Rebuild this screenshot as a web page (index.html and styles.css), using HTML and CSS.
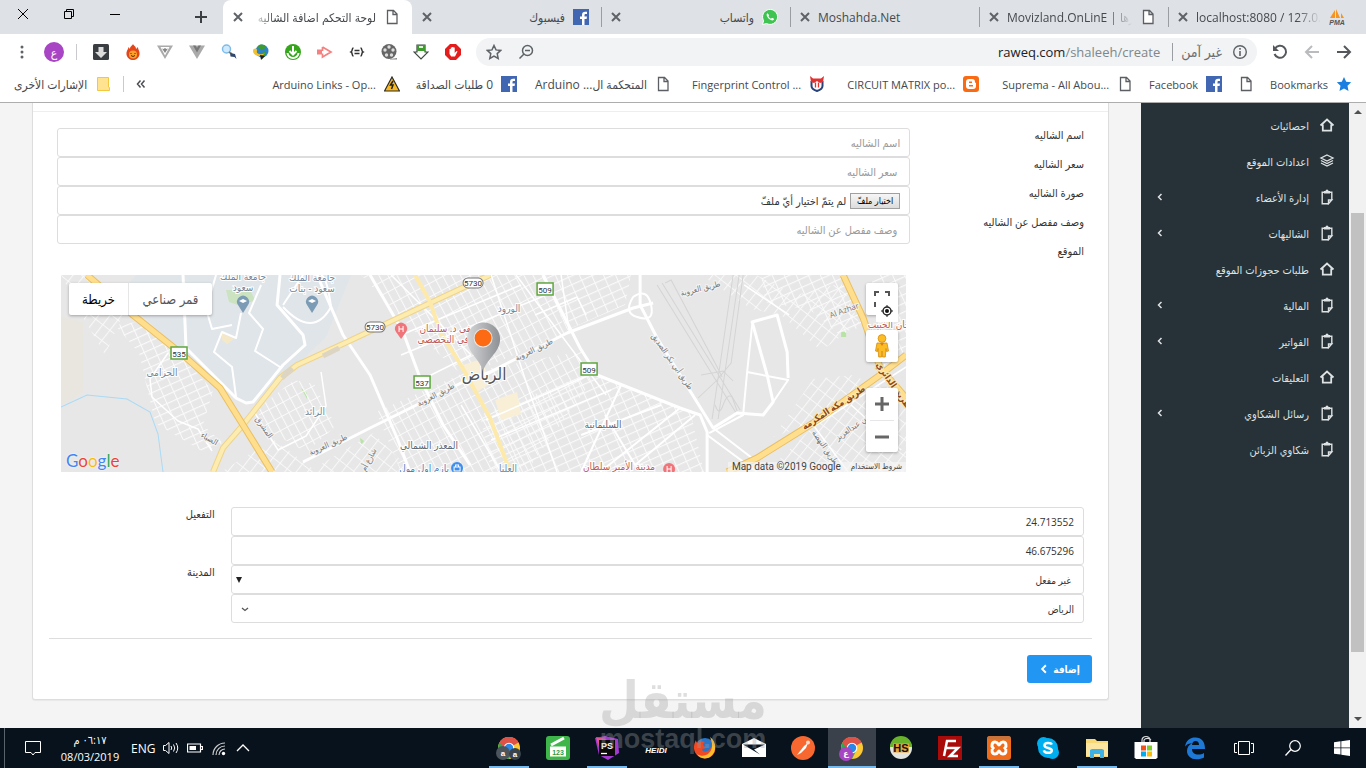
FILE: index.html
```html
<!DOCTYPE html>
<html lang="ar" dir="rtl">
<head>
    <meta charset="UTF-8">
    <meta name="viewport" content="width=device-width, initial-scale=1">
    <title>لوحة التحكم اضافة الشاليه</title>
    <link rel="stylesheet" href="styles.css">
</head>
<body>
    <!-- shared icons -->
    <svg class="sprite" aria-hidden="true">
        <symbol id="i-close" viewBox="0 0 10 10"><path d="M1 1l8 8M9 1l-8 8" fill="none" stroke="#5f6368" stroke-width="2"/></symbol>
        <symbol id="i-doc" viewBox="0 0 16 16"><path d="M3.500 1.500h6l3.500 3.500v9.500h-9.500zM9 1.500v4h4" fill="#fff" stroke="#5b5e62" stroke-width="1.300"/></symbol>
        <symbol id="i-fb" viewBox="0 0 16 16"><path d="M0 0h16v16H0z" fill="#4267b2"/><path d="M9 16V10H7V7.500h2V6c0-2 1.200-3.200 3.200-3.200H14V5h-1.200c-1 0-1.300.5-1.300 1.300v1.200H14L13.600 10h-2.100v6z" fill="#fff"/></symbol>
        <symbol id="i-home" viewBox="0 0 16 16"><path d="M1.500 8.500L8 2.500l6.500 6M3.800 7.500v6.200h8.400V7.500" fill="none" stroke="currentColor" stroke-width="1.800"/></symbol>
        <symbol id="i-clip" viewBox="0 0 16 16"><path d="M5 3.300H3.200v11.400H9.500M12.800 10.500V3.300H11M9.500 14.700V11h3.300z" fill="none" stroke="currentColor" stroke-width="1.400"/><path d="M5 2h1.500a1.500 1.500 0 0 1 3 0H11v2.500H5z" fill="currentColor"/></symbol>
        <symbol id="i-layers" viewBox="0 0 16 16"><path d="M8 2l6 3-6 3-6-3zM2 7.500l6 3 6-3M2 10l6 3 6-3" fill="none" stroke="currentColor" stroke-width="1.300"/></symbol>
        <symbol id="i-left" viewBox="0 0 8 8"><path d="M5.500 1l-3 3 3 3" fill="none" stroke="currentColor" stroke-width="1.500"/></symbol>
        <symbol id="i-chrome" viewBox="0 0 24 24"><circle cx="12" cy="12" r="11" fill="#fcc934"/><path d="M12 12L2.500 6.500A11 11 0 0 1 21.500 6.500z" fill="#de5347"/><path d="M12 12L2.500 6.500A11 11 0 0 0 12 23l4-8z" fill="#2da94f"/><path d="M12 7h9.800A11 11 0 0 0 2.500 6.500L7 13z" fill="#de5347"/><circle cx="12" cy="12" r="5.300" fill="#fff"/><circle cx="12" cy="12" r="4.200" fill="#2b87e8"/></symbol>
    </svg>

    <header class="browser">
        <div class="tabs">
            <div class="tab">
                <svg class="fav" viewBox="0 0 16 16"><path d="M1 9L6 1v8zM7 9V0l4 9zM12 9V4l3 5z" fill="#f7941d"/><text x="8" y="15.500" text-anchor="middle" class="pma">PMA</text></svg>
                <span class="tab-title ltr fade-end">localhost:8080 / 127.0.0.1</span>
                <button class="tab-close" aria-label="إغلاق"><svg><use href="#i-close"/></svg></button>
            </div>
            <div class="tab">
                <svg class="fav"><use href="#i-doc"/></svg>
                <span class="tab-title ltr fade-end">Movizland.OnLinE | غيرها</span>
                <button class="tab-close" aria-label="إغلاق"><svg><use href="#i-close"/></svg></button>
            </div>
            <div class="tab">
                <span class="tab-title ltr">Moshahda.Net</span>
                <button class="tab-close" aria-label="إغلاق"><svg><use href="#i-close"/></svg></button>
            </div>
            <div class="tab">
                <svg class="fav" viewBox="0 0 16 16"><path d="M.5 15.500L1.600 11.700A7.500 7.500 0 1 1 4.500 14.500z" fill="#3fc351" stroke="#fff"/><path d="M5.500 4.200c-1 .6-1.200 1.800-.2 3.500 1.200 2 3 3.600 5 3.700 1 0 1.700-.8 1.700-1.700L10 8.700l-1 1C7.800 9.200 7 8.300 6.500 7.200l.7-1z" fill="#fff"/></svg>
                <span class="tab-title">واتساب</span>
                <button class="tab-close" aria-label="إغلاق"><svg><use href="#i-close"/></svg></button>
            </div>
            <div class="tab no-line">
                <svg class="fav"><use href="#i-fb"/></svg>
                <span class="tab-title">فيسبوك</span>
                <button class="tab-close" aria-label="إغلاق"><svg><use href="#i-close"/></svg></button>
            </div>
            <div class="tab active">
                <svg class="fav"><use href="#i-doc"/></svg>
                <span class="tab-title fade-start">لوحة التحكم اضافة الشاليه</span>
                <button class="tab-close" aria-label="إغلاق"><svg><use href="#i-close"/></svg></button>
            </div>
            <button class="new-tab" aria-label="علامة تبويب جديدة"><svg viewBox="0 0 12 12"><path d="M6 0v12M0 6h12" stroke="#3c4043" stroke-width="2"/></svg></button>
            <div class="window-buttons">
                <button aria-label="تصغير"><svg viewBox="0 0 12 12"><path d="M1 6.500h10" stroke="#000"/></svg></button>
                <button aria-label="استعادة"><svg viewBox="0 0 12 12"><path d="M1.500 3.500h7v7h-7zM3.500 3.500v-2h7v7h-2" fill="none" stroke="#000"/></svg></button>
                <button aria-label="إغلاق النافذة"><svg viewBox="0 0 12 12"><path d="M1 1l10 10M11 1L1 11" stroke="#000"/></svg></button>
            </div>
        </div>

        <div class="toolbar">
            <button class="tool" aria-label="رجوع"><svg viewBox="0 0 16 16"><path d="M1 8h13M8 2l6 6-6 6" fill="none" stroke="#54585c" stroke-width="2"/></svg></button>
            <button class="tool" aria-label="تقدم"><svg viewBox="0 0 16 16"><path d="M15 8H2M8 2L2 8l6 6" fill="none" stroke="#b9bbbe" stroke-width="2"/></svg></button>
            <button class="tool" aria-label="تحديث"><svg viewBox="0 0 16 16"><path d="M3 4.500A6 6 0 1 1 2.500 10" fill="none" stroke="#54585c" stroke-width="2"/><path d="M1 1v6h6z" fill="#54585c"/></svg></button>
            <div class="omnibox">
                <svg viewBox="0 0 16 16"><circle cx="8" cy="8" r="6.300" fill="none" stroke="#5f6368" stroke-width="1.400"/><path d="M8 7v5M8 4v1.700" stroke="#5f6368" stroke-width="1.600"/></svg>
                <span class="secure">غير آمن</span>
                <span class="url" dir="ltr">raweq.com<span>/shaleeh/create</span></span>
                <svg viewBox="0 0 16 16"><circle cx="9.500" cy="6.500" r="5" fill="none" stroke="#5f6368" stroke-width="1.500"/><path d="M7 6.500h5M6 10l-4.500 4.500" stroke="#5f6368" stroke-width="1.500"/></svg>
                <svg viewBox="0 0 16 16"><path d="M8 1.500l2 4.400 4.700.5-3.500 3.200 1 4.800L8 12l-4.200 2.400 1-4.800L1.300 6.400 6 5.900z" fill="none" stroke="#5f6368" stroke-width="1.500"/></svg>
            </div>
            <div class="extensions">
                <svg viewBox="0 0 16 16"><path d="M5 0h6l5 5v6l-5 5H5l-5-5V5z" fill="#e51c1c"/><path d="M4.500 8V5h1.300V3.500h1.300V3h1.300v.5h1.300V9l1.800-2 1 .5L10 12.500H6.200L4.500 10z" fill="#fff"/></svg>
                <svg viewBox="0 0 16 16"><path d="M4 1h8v7h3l-7 7-7-7h3z" fill="#fff" stroke="#3b4a3f" stroke-width="1.200"/><path d="M4 1h8v6H4z" fill="#3d9a2d"/><path d="M6 2h4v2H6z" fill="#dff0da"/></svg>
                <svg viewBox="0 0 16 16"><circle cx="8" cy="7.500" r="7.500" fill="#666"/><g fill="#ddd"><circle cx="8" cy="3" r="1.700"/><circle cx="12" cy="6" r="1.700"/><circle cx="10.500" cy="11" r="1.700"/><circle cx="5.500" cy="11" r="1.700"/><circle cx="4" cy="6" r="1.700"/></g><path d="M9 15c3 0 5-1 7-1v1.500H9z" fill="#888"/></svg>
                <svg viewBox="0 0 16 16"><path d="M4.500 4C2.500 4 4 7 2 8c2 1 .5 4 2.500 4M11.500 4c2 0 .5 3 2.500 4-2 1-.5 4-2.500 4M5.500 6.500h5M5.500 9.500h5" fill="none" stroke="#333" stroke-width="1.500"/></svg>
                <svg viewBox="0 0 16 16"><path d="M5.500 3l8.500 5-8.500 5V9.500M5.500 3v4" fill="none" stroke="#f48080" stroke-width="1.700"/><path d="M0 5.500h5v5H0z" fill="#f48080"/></svg>
                <svg viewBox="0 0 16 16"><circle cx="8" cy="8" r="8" fill="#35a51b"/><path d="M8 2v8M4.500 7L8 10.500 11.500 7M2.500 9a5.500 5 0 0 0 11 0" fill="none" stroke="#fff" stroke-width="2"/></svg>
                <svg viewBox="0 0 16 16"><circle cx="9" cy="7" r="6.500" fill="#2c83c6"/><path d="M5 2c3-3 7-1 8 1l-3 3-4-1zM9 9l4-2-1 5-3 3z" fill="#3e9b2f"/><path d="M0 7c0-3 4-3 4-1s-1 3 2 4 6-1 6-1c-3 5-12 3-12-2z" fill="#f2c12e"/><path d="M7 11l5 1-4 4z" fill="#222"/></svg>
                <svg viewBox="0 0 16 16"><circle cx="5.500" cy="5" r="4" fill="#cfeaff" stroke="#7ebce8" stroke-width="1.500"/><path d="M8 8l3 2" stroke="#777" stroke-width="2"/><path d="M9 9l5 1 1.500 5-2-2-4-.5z" fill="#31476b"/></svg>
                <svg viewBox="0 0 16 16"><path d="M0 1.500h16L8 15z" fill="#aaa"/><path d="M4 1.500h2.500L8 4l1.500-2.500H12L8 8.500z" fill="#777"/></svg>
                <svg viewBox="0 0 16 16"><path d="M0 1.500h16L8 15z" fill="#aaa"/><path d="M3.500 3h9L8 11.500z" fill="#fff"/><path d="M5 4.500l1.500.5L8 4l1.500 1L11 4.500 8 9z" fill="#888"/></svg>
                <svg viewBox="0 0 16 16"><path d="M8 0c1 2 3 2 3 5l2-2c0 3 2 4 1.500 7.500C14 14 11 16 8 16s-6-2-6.500-5.500C1 7 3 6 3.500 3L5 5c0-3 2-3 3-5z" fill="#e4461b"/><circle cx="8" cy="10.500" r="4" fill="#f9a12b"/><path d="M6 10v-1M10 10v-1M6 11.500q2 2 4 0" fill="none" stroke="#5a2508"/></svg>
                <svg viewBox="0 0 16 16"><rect width="16" height="16" rx="1.500" fill="#3a3e42"/><path d="M5.500 3h5v5H14l-6 6-6-6h3.500z" fill="#ddd"/></svg>
            </div>
            <span class="divider"></span>
            <button class="avatar">ع</button>
            <button class="dots" aria-label="القائمة"><svg viewBox="0 0 4 14"><g fill="#5f6368"><circle cx="2" cy="2" r="1.500"/><circle cx="2" cy="7" r="1.500"/><circle cx="2" cy="12" r="1.500"/></g></svg></button>
        </div>

        <nav class="bookmarks">
            <a href="#"><svg viewBox="0 0 16 16"><path d="M8 1l2.200 4.700 5 .6-3.700 3.500 1 5.200L8 12.500 3.500 15l1-5.200L.8 6.300l5-.6z" fill="#1a7fe0"/></svg><span class="latin" dir="ltr">Bookmarks</span></a>
            <a href="#" aria-label="صفحة"><svg><use href="#i-doc"/></svg></a>
            <a href="#"><svg><use href="#i-fb"/></svg><span class="latin" dir="ltr">Facebook</span></a>
            <a href="#" class="wide"><svg><use href="#i-doc"/></svg><span class="latin" dir="ltr">Suprema - All Abou...</span></a>
            <a href="#" class="wide"><svg viewBox="0 0 16 16"><rect width="16" height="16" rx="3" fill="#f96a12"/><path d="M6 3h3a3 3 0 0 1 3 3v.7h1V10a3 3 0 0 1-3 3H6a3 3 0 0 1-3-3V6a3 3 0 0 1 3-3z" fill="#fff"/><path d="M6 6.200h3M6 9.800h4" stroke="#f96a12" stroke-width="1.500"/></svg><span class="latin" dir="ltr">CIRCUIT MATRIX po...</span></a>
            <a href="#" class="wide"><svg viewBox="0 0 16 16"><path d="M2.500 5v5c0 3 2.500 4 5.500 5 3-1 5.500-2 5.500-5V5" fill="none" stroke="#29427c" stroke-width="2"/><path d="M1 0l3 2.500h8L15 0l-1 6-3 1-3-2-3 2-3-1z" fill="#e03030"/><path d="M6.500 6.500v5M9.500 6.500v5" stroke="#e03030" stroke-width="1.300"/></svg><span class="latin" dir="ltr">Fingerprint Control ...</span></a>
            <a href="#" class="wide"><svg><use href="#i-doc"/></svg><span dir="ltr">Arduino ...المتحكمة ال</span></a>
            <a href="#"><svg><use href="#i-fb"/></svg><span>0 طلبات الصداقة</span></a>
            <a href="#"><svg viewBox="0 0 16 16"><path d="M8 1l7.500 14H.5z" fill="#f9b81f" stroke="#2a2a2a" stroke-width="1.200"/><path d="M9 5L6.500 9H9l-1.500 4" fill="none" stroke="#222" stroke-width="1.500"/></svg><span class="latin" dir="ltr">Arduino Links - Op...</span></a>
            <button class="more" aria-label="المزيد"><svg viewBox="0 0 10 10"><path d="M4.500 1.500L1.500 5l3 3.500M8.500 1.500l-3 3.500 3 3.500" fill="none" stroke="#4b4e52" stroke-width="1.500"/></svg></button>
            <span class="divider"></span>
            <a href="#"><svg viewBox="0 0 16 16"><path d="M2.500 1.500h11V11l1 .5v3h-12z" fill="#ffe391" stroke="#f5c73c"/></svg><span>الإشارات الأخرى</span></a>
        </nav>
    </header>

    <div class="page">
        <div class="scrollbar" aria-hidden="true">
            <svg viewBox="0 0 8 4"><path d="M0 4l4-4 4 4z" fill="#505050"/></svg>
            <div class="track"><div class="thumb"></div></div>
            <svg viewBox="0 0 8 4"><path d="M0 0l4 4 4-4z" fill="#505050"/></svg>
        </div>

        <aside class="sidebar">
            <a href="#"><svg><use href="#i-home"/></svg><span>احصائيات</span></a>
            <a href="#"><svg><use href="#i-layers"/></svg><span>اعدادات الموقع</span></a>
            <a href="#"><svg><use href="#i-clip"/></svg><span>إدارة الأعضاء</span><svg class="arrow"><use href="#i-left"/></svg></a>
            <a href="#"><svg><use href="#i-clip"/></svg><span>الشاليهات</span><svg class="arrow"><use href="#i-left"/></svg></a>
            <a href="#"><svg><use href="#i-home"/></svg><span>طلبات حجوزات الموقع</span></a>
            <a href="#"><svg><use href="#i-clip"/></svg><span>المالية</span><svg class="arrow"><use href="#i-left"/></svg></a>
            <a href="#"><svg><use href="#i-clip"/></svg><span>الفواتير</span><svg class="arrow"><use href="#i-left"/></svg></a>
            <a href="#"><svg><use href="#i-home"/></svg><span>التعليقات</span></a>
            <a href="#"><svg><use href="#i-clip"/></svg><span>رسائل الشكاوي</span><svg class="arrow"><use href="#i-left"/></svg></a>
            <a href="#"><svg><use href="#i-clip"/></svg><span>شكاوي الزبائن</span></a>
        </aside>

        <main class="content">
            <form class="panel">
                <div class="panel-heading"></div>
                <div class="panel-body">
                    <div class="row">
                        <label for="name">اسم الشاليه</label>
                        <div class="field"><input type="text" id="name" placeholder="اسم الشاليه"></div>
                    </div>
                    <div class="row">
                        <label for="price">سعر الشاليه</label>
                        <div class="field"><input type="text" id="price" placeholder=" سعر الشاليه"></div>
                    </div>
                    <div class="row">
                        <label for="image">صورة الشاليه</label>
                        <div class="field">
                            <div class="file">
                                <input type="file" id="image">
                                <label for="image" class="file-button">اختيار ملفّ</label>
                                <span>لم يتمّ اختيار أيّ ملفّ</span>
                            </div>
                        </div>
                    </div>
                    <div class="row">
                        <label for="desc">وصف مفصل عن الشاليه</label>
                        <div class="field"><input type="text" id="desc" placeholder=" وصف مفصل عن الشاليه"></div>
                    </div>
                    <div class="row">
                        <span class="label">الموقع</span>
                    </div>

                    <div class="map">
                        <svg class="map-canvas" viewBox="0 0 845 197" preserveAspectRatio="xMidYMid slice">
                            <defs>
                                <pattern id="g1" width="11" height="8" patternUnits="userSpaceOnUse" patternTransform="rotate(-24)"><path d="M0 .5h11M.5 0v8" stroke="#fafafa"/></pattern>
                                <pattern id="g2" width="8" height="12" patternUnits="userSpaceOnUse" patternTransform="rotate(-28)"><path d="M0 .5h8M.5 0v12" stroke="#fafafa"/></pattern>
                                <pattern id="g3" width="9" height="13" patternUnits="userSpaceOnUse" patternTransform="rotate(38)"><path d="M0 .5h9M.5 0v13" stroke="#f8f8f8"/></pattern>
                                <linearGradient id="pin"><stop offset="0" stop-color="#d5d6d8"/><stop offset="1" stop-color="#8d9094"/></linearGradient>
                            </defs>
                            <path d="M0 0h845v197H0z" fill="#e7e7e7"/>
                            <path d="M0 42l22 5v70L0 130z" fill="#e9e6df"/>
                            <path d="M75 0h215l-25 62-44 42-29 24h-10L125 80 58 20z" fill="#e0e5e9"/>
                            <path d="M165 15h24l5 10-14 6-12-4z" fill="#cbe3c0"/>
                            <path d="M161 58l12 6-7 5-5-4z" fill="#f5e8c8"/>
                            <path d="M240 113l6 5v6zM299 163l4 3-3 4zM780 57h5v5h-5z" fill="#b9e3a6"/>

                            <!-- street blocks -->
                            <path d="M54 50l30-4 40 38 28 32-10 34 20 18-18 10-50-30L78 78z" fill="url(#g1)"/>
                            <path d="M0 0h24l40 35-20 45-20-34z" fill="url(#g3)"/>
                            <path d="M195 135l38-30 20 4 22 42-30 26-35-20z" fill="url(#g2)"/>
                            <path d="M300 0h185l20 58-90 38 105-20 15 24-70 97H340l-25-60 85-38-42-38z" fill="url(#g2)"/>
                            <path d="M419 140l110-42 100 38 14 61H430z" fill="url(#g1)"/>
                            <path d="M480 0h90l-6 30-58 25z" fill="url(#g1)"/>
                            <path d="M212 164l40 30 60-36 40 39H160zM640 0h55l40 20 45-12 18 40-38 28-40-36-30-6zM752 104l40-4 20 10-60 38-40 14z" fill="url(#g3)"/>
                            <path d="M752 152l70-46 23 30v61H705z" fill="url(#g3)"/>
                            <path d="M700 0h80l24 50-25 10-30-25-45-8zM810 0h35v75l-22 16z" fill="url(#g1)"/>
                            <path d="M402 90l18-6 10 24-16 10zM434 125l22-8 4 22-20 6z" fill="#f8efd6"/>

                            <path d="M0 132l26-12 40 4 23 13 8 22 5 38" fill="none" stroke="#aadaf5" stroke-width="1"/>

                            <!-- airport runways -->
                            <g fill="none" stroke="#d4d4d4" stroke-width="1">
                                <path d="M596 10l79 128M601 8l78 127M604 8l6-3 45 85 6 12M672 0l-21 144M678 0l-21 144M682 0l-12 88-15 18-18 17"/>
                                <path d="M654 130q4 12 8 0t9-8l5 14M640 100l22-4 10 10"/>
                            </g>

                            <!-- white roads -->
                            <g fill="none" stroke="#fff" stroke-width="2" stroke-linejoin="round">
                                <path d="M122 0l3 73 50 50 10 5 7-1 30-37 22-20-2-10-26-30 3-30" stroke-width="3"/>
                                <path d="M180 38l-5 25-14-6-8 20 18 15 4 30M200 10l-12 28 14 16-8 22 25 16M222 32q30 32 48 0q-4-30-10-32M222 30l20-30M155 0l-10 34 6 20 20-4"/>
                                <path d="M256 0l26 60 27 40 27 63 13 34M309 0l33 57 17 46 23 47 27 40" stroke-width="3"/>
                                <path d="M242 187l67-34 93-46 27-10 77-39 66-25 20-5" stroke-width="3"/>
                                <path d="M330 0l80 80M430 0l36 110 30 87M455 0l90 120M500 0l8 56M340 60l120-50M340 80l150-62M360 105l50-25M425 145l110-48M430 165l120-50M400 130l40 67M525 40l-9-18-42 18" stroke-width="1.500"/>
                                <path d="M482 0l37 73 17 27 83 33 20 7 7 17v40M579 0v30l17 33 56 90 24-15 26 2 10-13-6-27-15-53 25-7 10 37 1 26" stroke-width="3"/>
                                <path d="M652 153l52 40M691 50l-5 47-4 43-34 18M686 97l41 8-15 22M619 133l-80 64M634 140l-60 50-30-50M600 130l-80 30M560 110l-40 87M646 160l50 37"/>
                                <path d="M572 22q14-10 18 8t-14 12q-14-4-4-20z"/>
                                <path d="M107 78l-18 26 2 18 26 24 20 8 14 22M192 135l25 40 28-14 20-30-5-34M752 150l35 47M752 152l93-60M790 130l50 45M728 40l-45-30" stroke-width="1.500"/>
                            </g>

                            <!-- main roads -->
                            <g fill="none" stroke-linejoin="round">
                                <path d="M152 197l10-24 20-23 37-47 17-13 50-23 83-39 60-28" stroke="#eed48b" stroke-width="6"/>
                                <path d="M152 197l10-24 20-23 37-47 17-13 50-23 83-39 60-28" stroke="#fdecb0" stroke-width="4"/>
                                <path d="M354 0l15 27 10 30 22 35 28 51 20 54" stroke="#fdeaaa" stroke-width="4"/>
                                <path d="M26 0l46 40 50 40 37 33 23 37 29 47M666 197l30-14 56-35 67-48 26-20M782 0l20 43 17 50 26 30" stroke="#e9bf62" stroke-width="7"/>
                                <path d="M26 0l46 40 50 40 37 33 23 37 29 47M666 197l30-14 56-35 67-48 26-20M782 0l20 43 17 50 26 30" stroke="#ffdf8e" stroke-width="5"/>
                                <path d="M221 103l10-10M262 81l16-8" stroke="#ddd5c4" stroke-width="5"/>
                            </g>

                            <!-- road numbers -->
                            <g class="shield" text-anchor="middle">
                                <rect x="110" y="72" width="16" height="12" fill="#fff" stroke="#5fa63e" stroke-width="1.500"/><text x="118" y="82">535</text>
                                <rect x="353" y="101" width="16" height="12" fill="#fff" stroke="#5fa63e" stroke-width="1.500"/><text x="361" y="111">537</text>
                                <rect x="476" y="8" width="16" height="12" fill="#fff" stroke="#5fa63e" stroke-width="1.500"/><text x="484" y="18">509</text>
                                <rect x="520" y="88" width="16" height="12" fill="#fff" stroke="#5fa63e" stroke-width="1.500"/><text x="528" y="98">509</text>
                                <rect x="304" y="47" width="20" height="10" rx="5" fill="#fff" stroke="#777"/><text x="314" y="55">5730</text>
                                <rect x="402" y="3" width="20" height="10" rx="5" fill="#fff" stroke="#777"/><text x="412" y="11">5730</text>
                            </g>

                            <!-- places -->
                            <g class="place" text-anchor="middle">
                                <text x="182" y="5">جامعة الملك</text><text x="182" y="16">سعود</text>
                                <text x="251" y="6">جامعة الملك</text><text x="251" y="17">سعود - بنات</text>
                                <text x="101" y="101">الحزامى</text>
                                <text x="254" y="140">الرائد</text>
                                <text x="368" y="174" class="dark">المعذر الشمالي</text>
                                <text x="542" y="153" class="dark">السليمانية</text>
                                <text x="448" y="37">الورود</text>
                                <text x="447" y="197">العليا</text>
                                <text x="363" y="197" class="blue">بازم اول مول</text>
                                <text x="396" y="57" class="red">مستشفى د. سليمان</text>
                                <text x="396" y="68" class="red">الحبيب في التخصصي</text>
                                <text x="558" y="195" class="red">مدينة الأمير سلطان</text>
                                <text x="828" y="53" class="red">خان الخبيب</text>
                                <text x="423" y="105" class="city">الرياض</text>
                            </g>
                            <g class="street" text-anchor="middle">
                                <text transform="translate(268 172) rotate(-24)">طريق العروبة</text>
                                <text transform="translate(376 122) rotate(-28)">طريق العروبة</text>
                                <text transform="translate(474 77) rotate(-26)">طريق العروبة</text>
                                <text transform="translate(640 16) rotate(-14)">طريق العروبة</text>
                                <text transform="translate(609 88) rotate(55)">طريق أبي بكر الصديق</text>
                                <text transform="translate(201 154) rotate(55)">المشرق</text>
                                <text transform="translate(147 166) rotate(30)">الصباء</text>
                                <text transform="translate(784 38) rotate(-20)">Al Azhar</text>
                                <text transform="translate(762 174) rotate(55)">طريق النهضة</text>
                                <text transform="translate(792 155) rotate(-35)">بن عبدالعزيز</text>
                                <text transform="translate(310 186) rotate(-62)">شارع أم</text>
                                <text transform="translate(774 135) rotate(-33)" class="brown">طريق مكة المكرمة</text>
                                <text transform="translate(830 112) rotate(55)" class="brown">طريق الدائري</text>
                            </g>
                            <g>
                                <path d="M182 38l-5-8a6 6 0 1 1 10 0zM251 38l-5-8a6 6 0 1 1 10 0z" fill="#7b9cb4"/>
                                <path d="M178 26l4-2 4 2-4 2zM247 26l4-2 4 2-4 2z" fill="#fff"/>
                                <path d="M340 64l-5-7a6 6 0 1 1 10 0z" fill="#f0757b"/><path d="M338 51v6M342 51v6M338 54h4" stroke="#fff"/>
                                <circle cx="608" cy="194" r="6" fill="#f0757b"/><path d="M606 191v6M610 191v6M606 194h4" stroke="#fff"/>
                                <circle cx="396" cy="193" r="6" fill="#3d8ef0"/><path d="M393 192h6v4h-6zM394.500 192v-2h3v2" fill="none" stroke="#fff"/>
                            </g>
                            <path d="M422 97c-2-12-16-19-16-33a16.500 16.500 0 0 1 33 0c0 14-15 21-17 33z" fill="url(#pin)"/>
                            <circle cx="422" cy="63" r="9" fill="#fd6a14" stroke="#e8e8e8"/>
                        </svg>
                        <div class="map-types">
                            <button type="button">قمر صناعي</button>
                            <button type="button" class="on">خريطة</button>
                        </div>
                        <div class="map-controls">
                            <button type="button" class="map-button" aria-label="ملء الشاشة"><svg viewBox="0 0 16 16"><path d="M1 5V1h4M11 1h4v4M1 11v4h4M11 15h4v-4" fill="none" stroke="#555" stroke-width="2"/></svg></button>
                            <button type="button" class="locate" aria-label="موقعي"><svg viewBox="0 0 12 12"><circle cx="6" cy="6" r="4" fill="none" stroke="#222" stroke-width="1.500"/><circle cx="6" cy="6" r="2" fill="#111"/><path d="M6 0v2M6 10v2M0 6h2M10 6h2" stroke="#222"/></svg></button>
                            <button type="button" class="map-button pegman" aria-label="التجوّل الافتراضي"><svg viewBox="0 0 14 24"><path d="M2 9h10l1.500 8-2 .5-.5-3-.7 8.500H7.500L7 17l-.5 6H3.700L3 14.500l-.5 3-2-.5z" fill="#fbbc24" stroke="#d68c12" stroke-width=".8"/><path d="M5 9l2 3 2-3" fill="#e37d12"/><circle cx="7" cy="4.500" r="3.900" fill="#fbbc24" stroke="#d68c12" stroke-width=".8"/></svg></button>
                            <div class="zoom">
                                <button type="button" aria-label="تكبير"><svg viewBox="0 0 14 14"><path d="M7 0v14M0 7h14" stroke="#666" stroke-width="3"/></svg></button>
                                <button type="button" aria-label="تصغير"><svg viewBox="0 0 14 14"><path d="M0 7h14" stroke="#666" stroke-width="3"/></svg></button>
                            </div>
                        </div>
                        <div class="google" dir="ltr"><span class="g-blue">G</span><span class="g-red">o</span><span class="g-yellow">o</span><span class="g-blue">g</span><span class="g-green">l</span><span class="g-red">e</span></div>
                        <div class="map-credit"><a href="#">شروط الاستخدام</a><span dir="ltr">Map data ©2019 Google</span></div>
                    </div>

                    <div class="row flipped">
                        <div class="field"><input type="text" aria-label="خط العرض" value="24.713552"></div>
                        <label for="active">التفعيل</label>
                    </div>
                    <div class="row flipped">
                        <div class="field"><input type="text" aria-label="خط الطول" value="46.675296"></div>
                    </div>
                    <div class="row flipped">
                        <div class="field select">
                            <select id="active"><option>غير مفعل</option><option>مفعل</option></select>
                            <svg viewBox="0 0 8 8"><path d="M1 1h6L4 7z" fill="#222"/></svg>
                        </div>
                        <label for="city">المدينة</label>
                    </div>
                    <div class="row flipped">
                        <div class="field select thin">
                            <select id="city"><option>الرياض</option></select>
                            <svg viewBox="0 0 8 8"><path d="M1 3l3 2.500L7 3" fill="none" stroke="#555" stroke-width="1.300"/></svg>
                        </div>
                    </div>

                    <hr>
                    <button type="submit" class="submit">إضافة <svg><use href="#i-left"/></svg></button>
                </div>
            </form>
        </main>
    </div>

    <footer class="taskbar">
        <button class="task" aria-label="ابدأ"><svg viewBox="0 0 16 16"><path d="M0 2.300l6.500-1v6.200H0zM7.300 1.200L16 0v7.500H7.300zM0 8.300h6.500v6.300L0 13.700zM7.300 8.300H16V16l-8.700-1.300z" fill="#fff"/></svg></button>
        <button class="task" aria-label="بحث"><svg viewBox="0 0 16 16"><circle cx="10" cy="6" r="5.300" fill="none" stroke="#fff" stroke-width="1.200"/><path d="M6 9.500L.5 15.500" stroke="#fff" stroke-width="1.300"/></svg></button>
        <button class="task" aria-label="عرض المهام"><svg class="mid" viewBox="0 0 20 16"><path d="M4.500 1.500h11v13h-11zM3 3.500H.5v9H3M17 3.500h2.500v9H17" fill="none" stroke="#fff"/></svg></button>
        <button class="task" aria-label="Edge"><svg class="big" viewBox="0 0 24 24"><path d="M2 11C3 4 7 1.500 12.500 1.500c6 0 9.500 4 9.500 11.500H9c0 4 3 5.500 6 5.500 2.500 0 4.500-.6 6-1.600v4.600c-2 1.200-4.500 1.800-7.500 1.800C7.500 23.300 4 19.500 4 15c0-3 1.600-6 5-7.700C4.500 7.500 3 9.500 2 11zm7-2h7c0-2.500-1.200-4-3.400-4C10.500 5 9.300 6.600 9 9z" fill="#1e79d6"/></svg></button>
        <button class="task" aria-label="المتجر"><svg class="big" viewBox="0 0 24 24"><path d="M8 6V4a4 3.500 0 0 1 8 0v2M10 6V4a4 3 0 0 1 7 0" fill="none" stroke="#ddd" stroke-width="1.200"/><path d="M.5 6h23v15.500L22 23H2L.5 21.500z" fill="#fff"/><path d="M7 9.500h5v5H7z" fill="#f1511b"/><path d="M13 9.500h5v5h-5z" fill="#80cc28"/><path d="M7 15.500h5v5H7z" fill="#00adef"/><path d="M13 15.500h5v5h-5z" fill="#fbbc09"/></svg></button>
        <button class="task open" aria-label="مستكشف الملفات"><svg class="big" viewBox="0 0 24 24"><path d="M1 3h9l2 2h11v16H1z" fill="#f8d775"/><path d="M1 7h22v13H1z" fill="#fbe5a0"/><path d="M5 22v-8l2-1h10l2 1v8h-4v-4H9v4z" fill="#3fb1e5"/></svg></button>
        <button class="task" aria-label="Skype"><svg class="big" viewBox="0 0 24 24"><circle cx="7.500" cy="7.500" r="6.500" fill="#00aff0"/><circle cx="16.500" cy="16.500" r="6.500" fill="#00aff0"/><circle cx="12" cy="12" r="10" fill="#00aff0"/><path d="M16 8.500C15 6.700 8.500 6.200 8.500 9.500c0 3.300 7.300 1.700 7.300 5 0 3.300-7 3-8-.2" fill="none" stroke="#fff" stroke-width="2.500"/></svg></button>
        <button class="task open" aria-label="XAMPP"><svg class="big" viewBox="0 0 24 24"><rect width="24" height="24" rx="3" fill="#ef6c1b"/><path d="M0 3a3 3 0 0 1 3-3h18a3 3 0 0 1 3 3z" fill="#c9733b"/><path d="M8 6c3 0 3 3 4 3s1-3 4-3 4 4 2 6c2 2 1 6-2 6s-3-3-4-3-1 3-4 3-4-4-2-6C4 10 5 6 8 6z" fill="none" stroke="#fff" stroke-width="3"/></svg></button>
        <button class="task" aria-label="FileZilla"><svg class="big" viewBox="0 0 24 24"><path d="M0 0h24v24H0z" fill="#a90b0b"/><path d="M6 20L9 5h9M7 12h7M12 12h8l-8 8h8" fill="none" stroke="#fff" stroke-width="2.500"/></svg></button>
        <button class="task" aria-label="HeidiSQL"><svg class="big" viewBox="0 0 24 24"><circle cx="12" cy="12" r="11" fill="#e3e3df"/><path d="M1 11a11 11 0 0 1 22 0z" fill="#68b32a"/><path d="M4 7.500h16v9H4z" fill="#e9a63c"/><text x="12" y="16" text-anchor="middle" class="hs">HS</text></svg></button>
        <button class="task current" aria-label="Chrome"><svg class="big" viewBox="0 0 24 24"><use href="#i-chrome"/><circle cx="6" cy="18" r="7" fill="#a845c4"/><text x="6" y="20" text-anchor="middle" class="badge">ع</text></svg></button>
        <button class="task" aria-label="Postman"><svg class="big" viewBox="0 0 24 24"><circle cx="12" cy="12" r="12" fill="#f6682f"/><path d="M6 19l7-9 4-3-2 5-5 5z" fill="#fff"/><circle cx="17" cy="6.500" r="2" fill="#ffd9c8"/></svg></button>
        <button class="task" aria-label="البريد"><svg class="big" viewBox="0 0 24 24"><path d="M0 8l12-6 12 6v13H0z" fill="#fff"/><path d="M1 8.500h22l-11 5 6 5z" fill="#0a1722"/></svg></button>
        <button class="task" aria-label="Firefox"><svg class="big" viewBox="0 0 24 24"><circle cx="12" cy="12" r="10" fill="#2876c9"/><path d="M3 4c-3 5-3 12 2 16 6 5 15 2 17-5 1-5-1-9-5-12 2 3 3 7 0 10-3 4-8 3-8 0l4-1-3-3c0-2 1-2 2-3-4-1-6 0-7 1-1 0-2-1-2-3z" fill="#ef4a24"/><path d="M17 1c7 5 7 15 0 20-5 3-11 1-13-3 4 3 9 2 12-1 4-4 4-10 1-16z" fill="#fbbf2b"/></svg></button>
        <button class="task" aria-label="HeidiSQL script"><svg class="big" viewBox="0 0 24 24"><text x="12" y="17" text-anchor="middle" class="heidi">HEIDI</text></svg></button>
        <button class="task open" aria-label="PhpStorm"><svg class="big" viewBox="0 0 24 24"><path d="M0 2l10-2 13 3 1 14-11 7-9-5z" fill="#a33ad0"/><path d="M1 1l10 2 5 6-12 2z" fill="#e0578c"/><path d="M4 4h16v16H4z" fill="#0a0a0a"/><text x="12" y="13" text-anchor="middle" class="ps">PS</text><path d="M6 17.500h6" stroke="#fff" stroke-width="1.300"/></svg></button>
        <button class="task" aria-label="123"><svg class="big" viewBox="0 0 24 24"><rect width="24" height="24" rx="3" fill="#3fb64a"/><path d="M5 11.500h14v8H5z" fill="#fff" stroke="#fff" stroke-width="2"/><path d="M5 9l13-7" stroke="#fff" stroke-width="3"/><text x="12" y="18.500" text-anchor="middle" class="clap">123</text></svg></button>
        <button class="task open" aria-label="Chrome"><svg class="big" viewBox="0 0 24 24"><use href="#i-chrome"/><circle cx="6" cy="17" r="7" fill="#4c545c"/><circle cx="18" cy="18" r="6" fill="#39424a"/><text x="6" y="20" text-anchor="middle" class="badge">a</text><text x="18" y="21" text-anchor="middle" class="badge">a</text></svg></button>

        <div class="tray">
            <svg viewBox="0 0 16 16"><path d="M2 11l6-6 6 6" fill="none" stroke="#fff" stroke-width="1.300"/></svg>
            <svg viewBox="0 0 16 16"><path d="M2 15A12 12 0 0 1 14 3M5 15a9 9 0 0 1 9-9M8 15a6 6 0 0 1 6-6" fill="none" stroke="#ccc" stroke-width="1.200"/><circle cx="12.500" cy="13.500" r="1.700" fill="#fff"/></svg>
            <svg viewBox="0 0 16 16"><path d="M.5 4h13v8H.5zM14 6.500h1.500v3H14" fill="none" stroke="#fff" stroke-width="1.200"/><path d="M2.500 6H9v4H2.500z" fill="#fff"/></svg>
            <svg viewBox="0 0 16 16"><path d="M.5 5.500h2L6 2.500v11l-3.500-3h-2zM8 6q1.500 2 0 4M10.500 4.500q2.500 3.500 0 7M13 3q3.500 5 0 10" fill="none" stroke="#fff"/></svg>
            <span>ENG</span>
            <div class="clock"><span>٠٦:١٧ م</span><span dir="ltr">08/03/2019</span></div>
            <button class="notify" aria-label="الإشعارات"><svg viewBox="0 0 16 16"><path d="M.5 1.500h15v11H10L8 15l-2-2.500H.5z" fill="none" stroke="#fff"/></svg></button>
        </div>
    </footer>

    <div class="watermark" aria-hidden="true"><span class="mark-ar">مستقل</span><span class="mark-en" dir="ltr">mostaql.com</span></div>
</body>
</html>
```

FILE: styles.css
```css
* {
    box-sizing: border-box;
}
body {
    margin: 0;
    min-height: 100vh;
    display: flex;
    flex-direction: column;
    font-family: "Open Sans", "DejaVu Sans Condensed", "DejaVu Sans", sans-serif;
    font-size: 12px;
    color: #333;
    background: #f4f4f4;
}
button, input, select {
    font: inherit;
    color: inherit;
}
button {
    border: none;
    padding: 0;
    background: none;
    display: flex;
    align-items: center;
    justify-content: center;
}
a {
    color: inherit;
    text-decoration: none;
}
svg {
    width: 16px;
    height: 16px;
    flex: none;
}
.sprite {
    position: absolute;
    width: 0;
    height: 0;
}

/* browser */
.browser {
    background: #fff;
    border-bottom: 1px solid #adadad;
}
.tabs {
    display: flex;
    height: 34px;
    padding-right: 9px;
    background: #dee1e6;
}
.tab {
    width: 189px;
    display: flex;
    align-items: center;
    gap: 8px;
    padding: 0 12px 0 10px;
    background: linear-gradient(#9a9da1, #9a9da1) left center / 1px 20px no-repeat;
}
.tab.no-line {
    background: none;
}
.tab.active {
    background: #fff;
    border-radius: 8px 8px 0 0;
}
.tab-title {
    flex: 1;
    min-width: 0;
    overflow: hidden;
    white-space: nowrap;
    color: #45494d;
}
.ltr {
    direction: ltr;
    text-align: left;
}
.fade-end {
    mask-image: linear-gradient(to left, transparent, #000 24px);
}
.fade-start {
    mask-image: linear-gradient(to right, transparent, #000 24px);
}
.tab-close svg {
    width: 10px;
    height: 10px;
}
.pma {
    font: italic bold 7px "Liberation Sans", sans-serif;
    fill: #555;
    direction: ltr;
}
.new-tab {
    width: 45px;
}
.new-tab svg, .window-buttons svg {
    width: 12px;
    height: 12px;
}
.window-buttons {
    display: flex;
    margin-right: auto;
    padding-bottom: 6px;
}
.window-buttons button {
    width: 46px;
}
.toolbar {
    display: flex;
    align-items: center;
    height: 36px;
    padding: 0 14px;
    gap: 16px;
}
.omnibox {
    flex: 1;
    display: flex;
    align-items: center;
    gap: 16px;
    height: 28px;
    margin: 0 -1px;
    padding: 0 9px 0 10px;
    border-radius: 14px;
    background: #f1f3f4;
    font-size: 13px;
}
.secure {
    color: #6a6e72;
    padding-left: 8px;
    margin-right: -6px;
    border-left: 1px solid #9a9da1;
    line-height: 18px;
    font-size: 14px;
}
.url {
    flex: 1;
    margin-right: -4px;
    text-align: right;
    color: #202124;
}
.url span {
    color: #80868b;
}
.extensions {
    display: flex;
    gap: 16px;
}
.divider {
    width: 1px;
    height: 16px;
    background: #c8cacd;
}
.avatar {
    width: 20px;
    height: 20px;
    margin: 0 -4px 0 -2px;
    border-radius: 50%;
    background: #a845c4;
    color: #fff;
}
.dots {
    width: 16px;
}
.dots svg {
    width: 4px;
    height: 14px;
}
.bookmarks {
    display: flex;
    align-items: center;
    gap: 16px;
    height: 32px;
    padding: 0 14px 4px;
    white-space: nowrap;
}
.bookmarks a {
    display: flex;
    align-items: center;
    gap: 8px;
    color: #45494d;
}
.bookmarks .wide {
    width: 138px;
}
.bookmarks .latin {
    font-size: 11px;
}
.more {
    margin-right: auto;
}
.more svg {
    width: 10px;
    height: 10px;
}
.bookmarks .divider {
    margin: 0 -4px;
}

/* page */
.page {
    flex: 1;
    display: flex;
}
.scrollbar {
    width: 17px;
    display: flex;
    flex-direction: column;
    align-items: center;
    padding: 7px 0;
    background: #f1f1f1;
}
.scrollbar svg {
    width: 8px;
    height: 4px;
}
.track {
    flex: 1;
    width: 13px;
    padding: 99px 0 65px;
    display: flex;
}
.thumb {
    flex: 1;
    background: #c1c1c1;
}
.sidebar {
    width: 208px;
    padding: 4px 0;
    background: #263238;
    color: #dfe2e3;
    font-size: 11px;
}
.sidebar a {
    display: flex;
    align-items: center;
    gap: 10px;
    height: 36px;
    padding: 0 14px 0 15px;
}
.sidebar .arrow {
    width: 8px;
    height: 8px;
    margin-right: auto;
}
.content {
    flex: 1;
    padding: 0 32px 28px;
}
.panel {
    background: #fff;
    border: 1px solid #ddd;
    border-top: none;
    border-radius: 0 0 3px 3px;
    box-shadow: 0 1px 1px rgba(0, 0, 0, 0.05);
    font-size: 11px;
}
.panel-heading {
    height: 9px;
    border-bottom: 1px solid #eee;
}
.panel-body {
    padding: 16px;
}
.row {
    display: grid;
    grid-template-columns: 1fr 5fr;
    min-height: 29px;
}
.row.flipped {
    grid-template-columns: 5fr 1fr;
}
.row > label, .row > .label {
    padding: 0 8px;
    line-height: 14px;
}
.field {
    display: grid;
    padding: 0 8px;
}
.field input[type="text"], .field select, .file {
    width: 100%;
    height: 29px;
    padding: 0 9px;
    border: 1px solid #ddd;
    border-radius: 3px;
    background: #fff;
}
.flipped .field input[type="text"], .flipped .field select {
    font-size: 10px;
}
.field input::placeholder {
    color: #999;
    opacity: 1;
}
.file {
    display: flex;
    align-items: center;
    gap: 4px;
    position: relative;
}
.file input {
    position: absolute;
    width: 1px;
    height: 1px;
    opacity: 0;
}
.file-button {
    width: 50px;
    line-height: 14px;
    text-align: center;
    font-size: 9px;
    color: #000;
    border: 1px solid #a0a0a0;
    background: linear-gradient(#f6f6f6, #dcdcdc);
}
.select {
    align-items: center;
}
.select select, .select svg {
    grid-area: 1 / 1;
}
.select select {
    appearance: none;
    padding: 0 12px;
}
.select.thin select {
    padding: 0 9px;
}
.select svg {
    width: 8px;
    height: 8px;
    margin-left: 4px;
    justify-self: end;
    pointer-events: none;
}
.select.thin svg {
    margin-left: 10px;
}
hr {
    margin: 15px 0 16px;
    border: none;
    border-top: 1px solid #ddd;
}
.submit {
    width: 65px;
    height: 28px;
    gap: 4px;
    border-radius: 3px;
    background: #2196f3;
    color: #fff;
    font-size: 10px;
    font-weight: bold;
}
.submit svg {
    width: 10px;
    height: 10px;
}

/* map */
.map {
    position: relative;
    width: calc(100% / 6 * 5 - 24px);
    height: 197px;
    margin: 2px auto 35px 12px;
    overflow: hidden;
    background: #e7e7e7;
}
.map-canvas {
    display: block;
    width: 100%;
    height: 100%;
}
.map-canvas text {
    direction: rtl;
}
.shield text {
    font: 8px Roboto, sans-serif;
    direction: ltr;
    fill: #333;
}
.place {
    font-size: 10px;
    fill: #75879a;
    paint-order: stroke;
    stroke: #fff;
    stroke-width: 2px;
}
.place .dark {
    fill: #606a74;
}
.place .red {
    fill: #c05b55;
}
.place .blue {
    fill: #4a7fc0;
}
.place .city {
    font-size: 17px;
    fill: #555;
}
.street {
    font-size: 8px;
    fill: #777;
    paint-order: stroke;
    stroke: #f4f4f4;
    stroke-width: 2px;
}
.street .brown {
    font-size: 9px;
    font-weight: bold;
    fill: #8b4a20;
    stroke: #ffe9b0;
}
.map-types {
    position: absolute;
    top: 8px;
    left: 8px;
    display: flex;
    height: 32px;
    border-radius: 2px;
    background: #fff;
    box-shadow: 0 1px 3px rgba(0, 0, 0, 0.3);
    font-size: 13px;
    color: #565656;
}
.map-types button {
    width: 83px;
}
.map-types .on {
    width: 60px;
    border-right: 1px solid #e6e6e6;
    color: #000;
}
.map-controls {
    position: absolute;
    top: 8px;
    right: 8px;
}
.map-button, .zoom {
    width: 32px;
    height: 32px;
    border-radius: 2px;
    background: #fff;
    box-shadow: 0 1px 3px rgba(0, 0, 0, 0.3);
}
.locate {
    position: absolute;
    top: 17px;
    right: 0;
    width: 22px;
    height: 22px;
    background: #fff;
}
.locate svg {
    width: 12px;
    height: 12px;
}
.pegman {
    margin: 15px 0 26px;
}
.pegman svg {
    width: 14px;
    height: 24px;
}
.zoom {
    height: auto;
    padding: 0 4px;
}
.zoom button {
    width: 100%;
    height: 32px;
}
.zoom button + button {
    border-top: 1px solid #e6e6e6;
}
.zoom svg {
    width: 14px;
    height: 14px;
}
.google {
    position: absolute;
    left: 5px;
    bottom: 0;
    font: 17px/22px Lato, sans-serif;
    text-shadow: 0 0 2px #fff;
}
.g-blue { color: #4285f4; }
.g-red { color: #ea4335; }
.g-yellow { color: #fbbc05; }
.g-green { color: #34a853; }
.map-credit {
    position: absolute;
    right: 0;
    bottom: 0;
    display: flex;
    gap: 10px;
    padding: 0 4px;
    background: rgba(245, 245, 245, 0.7);
    font: 10px/10px Roboto, "DejaVu Sans Condensed", "DejaVu Sans", sans-serif;
    color: #444;
}
.map-credit a {
    font-size: 8px;
}

/* taskbar */
.taskbar {
    display: flex;
    gap: 1px;
    height: 40px;
    background: #07121c;
    color: #fff;
}
.task {
    width: 48px;
    border-bottom: 2px solid transparent;
    padding-top: 2px;
}
.task.open {
    background: linear-gradient(#76b9ed, #76b9ed) center bottom / 40px 2px no-repeat border-box;
}
.task.current {
    background: #3a414a;
    border-bottom-color: #76b9ed;
}
.task .mid {
    width: 20px;
}
.task .big {
    width: 24px;
    height: 24px;
    overflow: visible;
}
.hs, .ps, .badge, .clap, .heidi {
    font: bold 11px "Liberation Sans", "DejaVu Sans", sans-serif;
    direction: ltr;
    fill: #fff;
}
.hs {
    fill: #111;
}
.ps {
    font-size: 9px;
}
.badge {
    font-size: 8px;
}
.clap {
    font-size: 7px;
    fill: #2f9a3a;
}
.heidi {
    font-size: 8px;
    font-style: italic;
}
.tray {
    display: flex;
    align-items: center;
    gap: 8px;
    margin-right: auto;
    margin-left: 4px;
    border-left: 1px solid #59636b;
}
.clock {
    display: flex;
    flex-direction: column;
    align-items: center;
    width: 66px;
    line-height: 17px;
    font-size: 11px;
}
.notify {
    margin-left: 20px;
    margin-right: 8px;
}

/* site mark over the page */
.watermark {
    position: absolute;
    left: 600px;
    top: 671px;
    width: 166px;
    display: flex;
    flex-direction: column;
    align-items: center;
    color: rgba(160, 160, 160, 0.35);
    font-weight: bold;
    pointer-events: none;
}
.mark-ar {
    font-size: 51px;
    line-height: 54px;
}
.mark-en {
    font: bold 27px/28px "Liberation Sans", sans-serif;
}
```
